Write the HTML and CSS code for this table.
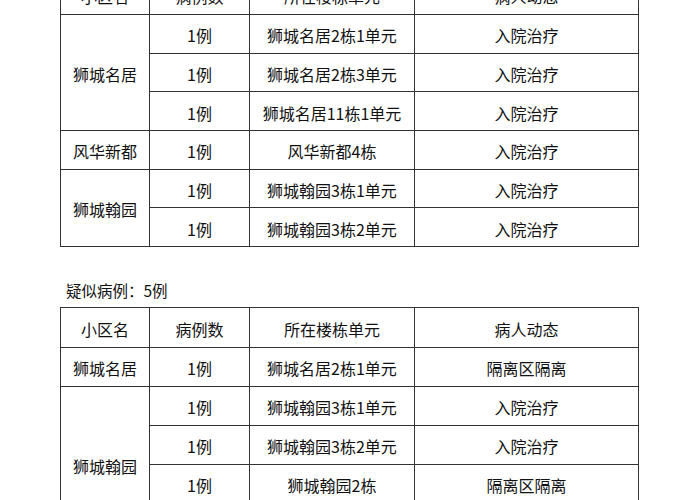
FILE: index.html
```html
<!DOCTYPE html>
<html lang="zh">
<head>
<meta charset="utf-8">
<title>病例信息</title>
<link rel="stylesheet" href="styles.css">
</head>
<body>
<div class="page">
  <section class="section">
    <p class="title">确诊病例：6例</p>
    <table class="cases confirmed">
      <colgroup><col class="c1"><col class="c2"><col class="c3"><col class="c4"></colgroup>
      <tr class="head"><td>小区名</td><td>病例数</td><td>所在楼栋单元</td><td>病人动态</td></tr>
      <tr><td rowspan="3">狮城名居</td><td>1例</td><td>狮城名居2栋1单元</td><td>入院治疗</td></tr>
      <tr><td>1例</td><td>狮城名居2栋3单元</td><td>入院治疗</td></tr>
      <tr><td>1例</td><td>狮城名居11栋1单元</td><td>入院治疗</td></tr>
      <tr><td>风华新都</td><td>1例</td><td>风华新都4栋</td><td>入院治疗</td></tr>
      <tr><td rowspan="2">狮城翰园</td><td>1例</td><td>狮城翰园3栋1单元</td><td>入院治疗</td></tr>
      <tr><td>1例</td><td>狮城翰园3栋2单元</td><td>入院治疗</td></tr>
    </table>
  </section>
  <section class="section">
    <p class="title">疑似病例：5例</p>
    <table class="cases">
      <colgroup><col class="c1"><col class="c2"><col class="c3"><col class="c4"></colgroup>
      <tr class="head"><td>小区名</td><td>病例数</td><td>所在楼栋单元</td><td>病人动态</td></tr>
      <tr><td>狮城名居</td><td>1例</td><td>狮城名居2栋1单元</td><td>隔离区隔离</td></tr>
      <tr><td rowspan="4">狮城翰园</td><td>1例</td><td>狮城翰园3栋1单元</td><td>入院治疗</td></tr>
      <tr><td>1例</td><td>狮城翰园3栋2单元</td><td>入院治疗</td></tr>
      <tr><td>1例</td><td>狮城翰园2栋</td><td>隔离区隔离</td></tr>
      <tr><td>1例</td><td>狮城翰园5栋</td><td>隔离区隔离</td></tr>
    </table>
  </section>
</div>
</body>
</html>
```
FILE: styles.css
```css
html, body {
  margin: 0;
  padding: 0;
  background: #ffffff;
}
body {
  font-family: "Noto Sans CJK SC", "Noto Sans", sans-serif;
  font-size: 16px;
  color: #111;
}
.page {
  margin-top: -54px;
  padding-left: 60px;
  display: flex;
  flex-direction: column;
  gap: 32px;
}
.title {
  margin: 0 0 6px 0;
  padding-left: 6px;
  height: 22px;
  line-height: 22px;
  font-size: 15.5px;
}
.cases {
  border-collapse: collapse;
  table-layout: fixed;
  width: 578px;
  border: 1px solid #222;
}
.c1 { width: 89px; }
.c2 { width: 100px; }
.c3 { width: 165px; }
.c4 { width: 224px; }
.cases td {
  border: 1px solid #333;
  padding: 3px 0 0 0;
  text-align: center;
  vertical-align: middle;
  line-height: 20px;
  font-size: 16px;
}
.cases tr { height: 39px; }
.cases tr.head { height: 40px; }
.confirmed tr { height: 38.67px; }
.confirmed tr.head { height: 40px; }
```
